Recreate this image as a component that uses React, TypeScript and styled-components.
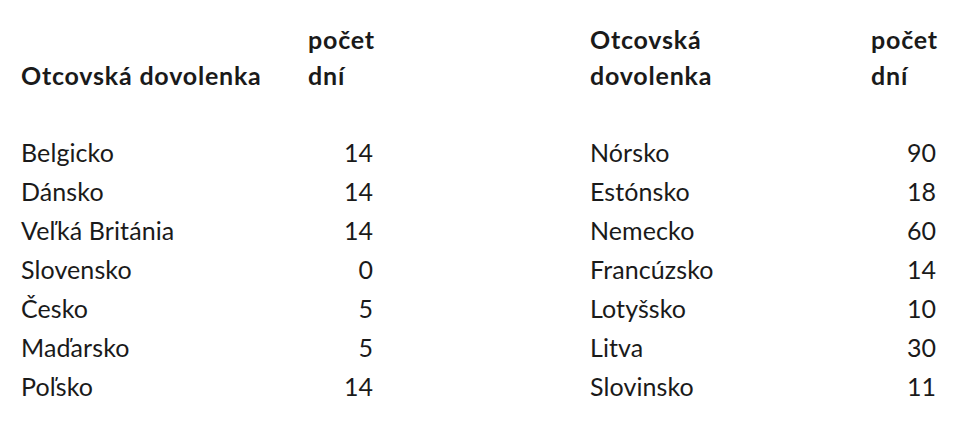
import React from "react";
import styled, { createGlobalStyle } from "styled-components";

const Global = createGlobalStyle`
  html, body { margin: 0; padding: 0; background: #ffffff; }
  body { font-family: Lato, "Open Sans", sans-serif; color: #1a1a1a; }
`;

const Page = styled.div`
  display: flex;
  padding: 21px 0 0 21px;
  width: 969px;
  height: 422px;
  box-sizing: border-box;
`;

const Table = styled.div<{ $nameWidth: number; $gapAfter: number }>`
  display: grid;
  grid-template-columns: ${(p) => p.$nameWidth}px 65px;
  margin-right: ${(p) => p.$gapAfter}px;
  font-size: 25px;
  align-content: start;
`;

const HeadCell = styled.div<{ $wrapWidth?: number }>`
  font-weight: 700;
  letter-spacing: 0.8px;
  line-height: 36px;
  align-self: end;
  ${(p) => (p.$wrapWidth ? `max-width: ${p.$wrapWidth}px;` : "white-space: nowrap;")}
  margin-bottom: 40px;
`;

const NameCell = styled.div`
  line-height: 39px;
  white-space: nowrap;
  letter-spacing: 0.1px;
`;

const NumCell = styled.div`
  line-height: 39px;
  text-align: right;
`;

type Row = [string, number];

const left: Row[] = [
  ["Belgicko", 14],
  ["Dánsko", 14],
  ["Veľká Británia", 14],
  ["Slovensko", 0],
  ["Česko", 5],
  ["Maďarsko", 5],
  ["Poľsko", 14],
];

const right: Row[] = [
  ["Nórsko", 90],
  ["Estónsko", 18],
  ["Nemecko", 60],
  ["Francúzsko", 14],
  ["Lotyšsko", 10],
  ["Litva", 30],
  ["Slovinsko", 11],
];

function DataTable({ rows, nameWidth, wrap, gapAfter }: { rows: Row[]; nameWidth: number; wrap?: number; gapAfter: number }) {
  return (
    <Table $nameWidth={nameWidth} $gapAfter={gapAfter}>
      <HeadCell $wrapWidth={wrap}>Otcovská dovolenka</HeadCell>
      <HeadCell $wrapWidth={70}>počet dní</HeadCell>
      {rows.map(([name, n]) => (
        <React.Fragment key={name}>
          <NameCell>{name}</NameCell>
          <NumCell>{n}</NumCell>
        </React.Fragment>
      ))}
    </Table>
  );
}

export default function App() {
  return (
    <>
      <Global />
      <Page>
        <DataTable rows={left} nameWidth={287} gapAfter={217} />
        <DataTable rows={right} nameWidth={281} wrap={170} gapAfter={0} />
      </Page>
    </>
  );
}
